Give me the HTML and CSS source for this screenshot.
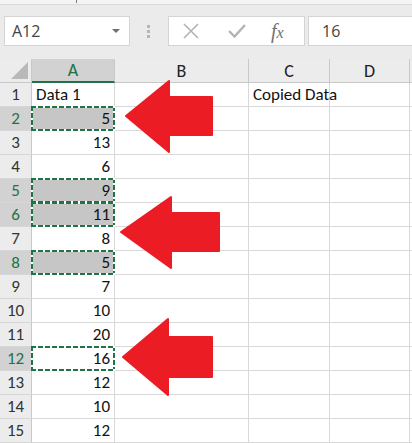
FILE: index.html
```html
<!DOCTYPE html>
<html lang="en">
<head>
    <meta charset="UTF-8">
    <meta name="viewport" content="width=device-width, initial-scale=1.0">
    <title>Copy cells</title>
    <link rel="stylesheet" href="styles.css">
</head>
<body>

<div class="top-strip"><span class="tick"></span></div>

<div class="formula-bar">
    <div class="name-box">
        <span>A12</span>
        <span class="caret"></span>
    </div>
    <div class="grip"><i></i><i></i><i></i></div>
    <div class="fx-buttons">
        <svg class="btn-icon" width="20" height="20" viewBox="0 0 20 20">
            <path d="M3 3 L17 17 M17 3 L3 17" stroke="#b3b3b3" stroke-width="1.6" fill="none"/>
        </svg>
        <svg class="btn-icon" width="20" height="20" viewBox="0 0 20 20">
            <path d="M2 10 L7.5 15.5 L18 4" stroke="#b3b3b3" stroke-width="2.4" fill="none"/>
        </svg>
        <span class="fx">f<i>x</i></span>
    </div>
    <div class="formula-input">16</div>
</div>

<div class="sheet">
    <div class="grid" id="grid"></div>

    <svg class="arrows" width="412" height="384" viewBox="0 59 412 384">
        <path d="M126 116 L169 81 L169 97 L212 97 L212 135 L169 135 L169 152 Z"/>
        <path d="M121 232 L171 197 L171 213 L219 213 L219 251 L171 251 L171 268 Z"/>
        <path d="M123 357 L168 319 L168 337 L212 337 L212 377 L168 377 L168 395 Z"/>
    </svg>
</div>

<script>
    const colA = ['Data 1', 5, 13, 6, 9, 11, 8, 5, 7, 10, 20, 16, 12, 10, 12];
    const copied = [2, 5, 6, 8, 12];
    const active = 12;
    const grid = document.getElementById('grid');

    function cell(cls, text) {
        const div = document.createElement('div');
        div.className = cls;
        if (text !== undefined) div.textContent = text;
        grid.appendChild(div);
        return div;
    }

    cell('corner');
    cell('col-head selected', 'A');
    ['B', 'C', 'D', ''].forEach(letter => cell('col-head', letter));

    colA.forEach((value, i) => {
        const row = i + 1;
        const isCopied = copied.includes(row);
        cell('row-head' + (isCopied ? ' selected' : ''), row);

        let cls = 'cell';
        if (typeof value === 'number') cls += ' num';
        if (isCopied) cls += row === active ? ' marquee' : ' marquee filled';
        cell(cls, value);

        cell('cell');
        cell('cell', row === 1 ? 'Copied Data' : '');
        cell('cell');
        cell('cell');
    });
</script>

</body>
</html>
```

FILE: styles.css
```css
* {
    box-sizing: border-box;
}
body {
    margin: 0;
    width: 412px;
    height: 443px;
    overflow: hidden;
    background: #fff;
    font-family: Calibri, Carlito, Lato, sans-serif;
}
.top-strip {
    position: relative;
    height: 5px;
    background: #f4f4f4;
    border-bottom: 1px solid #d8d8d8;
}
.tick {
    position: absolute;
    left: 76px;
    top: 0;
    width: 1px;
    height: 3px;
    background: #777;
}
.formula-bar {
    display: flex;
    align-items: stretch;
    height: 54px;
    padding: 11px 0 13px 4px;
    background: #ebebeb;
}
.name-box {
    display: flex;
    align-items: center;
    justify-content: space-between;
    width: 126px;
    padding: 0 9px 0 7px;
    background: #fff;
    border: 1px solid #d4d4d4;
    font-family: "Open Sans", sans-serif;
    font-size: 16px;
    color: #444;
}
.caret {
    width: 0;
    height: 0;
    border-left: 4px solid transparent;
    border-right: 4px solid transparent;
    border-top: 4px solid #6f6f6f;
}
.grip {
    display: flex;
    flex-direction: column;
    justify-content: center;
    gap: 2px;
    width: 38px;
    padding-left: 17px;
}
.grip i {
    width: 3px;
    height: 3px;
    background: #b5b5b5;
}
.fx-buttons {
    display: flex;
    align-items: center;
    width: 137px;
    padding-left: 12px;
    gap: 26px;
    background: #fff;
    border: 1px solid #d4d4d4;
}
.fx {
    margin-left: -2px;
    font-family: "Liberation Serif", serif;
    font-style: italic;
    font-size: 20px;
    color: #707070;
}
.fx i {
    font-size: 16px;
}
.formula-input {
    display: flex;
    align-items: center;
    flex: 1;
    margin-left: 3px;
    padding-left: 13px;
    background: #fff;
    border: 1px solid #d4d4d4;
    border-right: none;
    font-family: "Open Sans", sans-serif;
    font-size: 16px;
    color: #444;
}
.sheet {
    position: relative;
}
.grid {
    display: grid;
    grid-template-columns: 32px 83px 134px 81px 80px 1fr;
    grid-auto-rows: 24px;
}
.corner {
    position: relative;
    background: #ececec;
    border-right: 1px solid #c8c8c8;
    border-bottom: 1px solid #c8c8c8;
}
.corner::after {
    content: "";
    position: absolute;
    right: 3px;
    bottom: 3px;
    width: 17px;
    height: 17px;
    background: #b9b9b9;
    clip-path: polygon(100% 0, 100% 100%, 0 100%);
}
.col-head {
    display: flex;
    align-items: center;
    justify-content: center;
    background: #ececec;
    border-right: 1px solid #c8c8c8;
    border-bottom: 1px solid #c8c8c8;
    font-size: 18px;
    color: #222;
}
.col-head.selected {
    background: #d2d2d2;
    color: #217346;
    border-bottom: 2px solid #217346;
}
.row-head {
    display: flex;
    align-items: center;
    justify-content: center;
    background: #ececec;
    border-right: 1px solid #c8c8c8;
    border-bottom: 1px solid #d6d6d6;
    font-size: 17px;
    color: #333;
}
.row-head.selected {
    background: #d2d2d2;
    color: #217346;
}
.cell {
    position: relative;
    display: flex;
    align-items: center;
    padding: 0 4px;
    border-right: 1px solid #d9d9d9;
    border-bottom: 1px solid #d9d9d9;
    font-size: 17px;
    color: #111;
    white-space: nowrap;
}
.cell.num {
    justify-content: flex-end;
}
.cell.filled {
    background: #c6c6c6;
}
.cell.marquee::after {
    content: "";
    position: absolute;
    top: -1px;
    left: -1px;
    right: -1px;
    bottom: -1px;
    background:
        repeating-linear-gradient(90deg, #217346 0 5px, #fff 5px 7px) top / 100% 2px no-repeat,
        repeating-linear-gradient(90deg, #217346 0 5px, #fff 5px 7px) bottom / 100% 2px no-repeat,
        repeating-linear-gradient(180deg, #217346 0 5px, #fff 5px 7px) left / 2px 100% no-repeat,
        repeating-linear-gradient(180deg, #217346 0 5px, #fff 5px 7px) right / 2px 100% no-repeat;
}
.arrows {
    position: absolute;
    top: 0;
    left: 0;
    pointer-events: none;
}
.arrows path {
    fill: #ec1c24;
    stroke: #ec1c24;
    stroke-width: 2;
    stroke-linejoin: round;
}
```
